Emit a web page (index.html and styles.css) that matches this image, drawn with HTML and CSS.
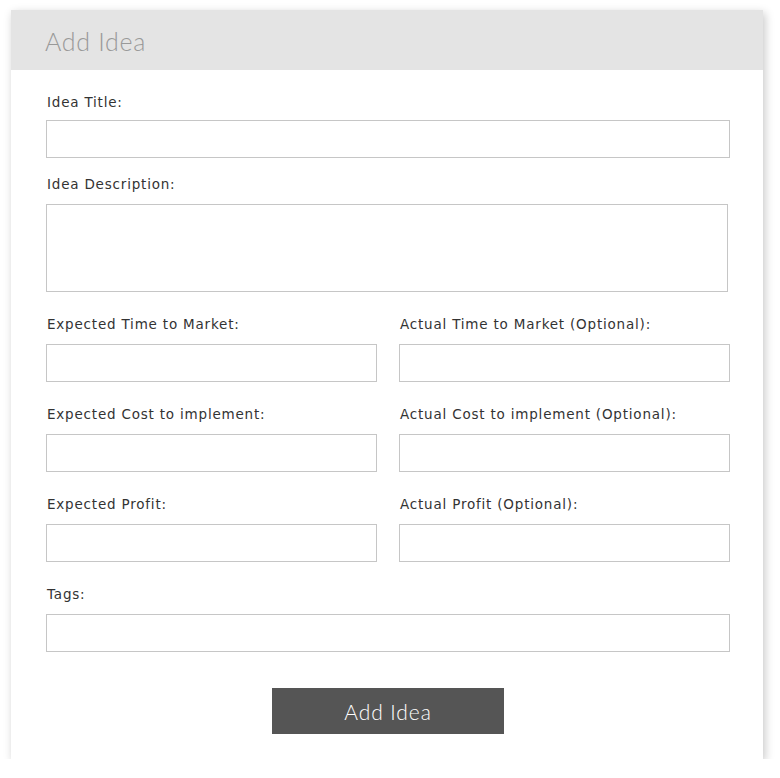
FILE: index.html
```html
<!DOCTYPE html>
<html lang="en">
<head>
    <meta charset="UTF-8">
    <meta name="viewport" content="width=device-width, initial-scale=1.0">
    <title>Add Idea</title>
    <link rel="stylesheet" href="styles.css">
</head>
<body>
    <div class="card">
        <div class="card-header">Add Idea</div>
        <form class="idea-form">
            <div class="field first">
                <label for="title">Idea Title:</label>
                <input type="text" id="title">
            </div>
            <div class="field">
                <label for="description">Idea Description:</label>
                <textarea id="description"></textarea>
            </div>
            <div class="row">
                <div class="field">
                    <label for="exp-time">Expected Time to Market:</label>
                    <input type="text" id="exp-time">
                </div>
                <div class="field">
                    <label for="act-time">Actual Time to Market (Optional):</label>
                    <input type="text" id="act-time">
                </div>
            </div>
            <div class="row">
                <div class="field">
                    <label for="exp-cost">Expected Cost to implement:</label>
                    <input type="text" id="exp-cost">
                </div>
                <div class="field">
                    <label for="act-cost">Actual Cost to implement (Optional):</label>
                    <input type="text" id="act-cost">
                </div>
            </div>
            <div class="row">
                <div class="field">
                    <label for="exp-profit">Expected Profit:</label>
                    <input type="text" id="exp-profit">
                </div>
                <div class="field">
                    <label for="act-profit">Actual Profit (Optional):</label>
                    <input type="text" id="act-profit">
                </div>
            </div>
            <div class="field">
                <label for="tags">Tags:</label>
                <input type="text" id="tags">
            </div>
            <div class="actions">
                <button type="button" class="submit">Add Idea</button>
            </div>
        </form>
    </div>
</body>
</html>
```

FILE: styles.css
```css
body {
    margin: 0;
    background-color: #fff;
    font-family: "DejaVu Sans", "Open Sans", sans-serif;
    color: #333;
}
.card {
    width: 752px;
    margin: 10px 0 0 11px;
    background-color: #fff;
    box-shadow: 2px 3px 9px rgba(0, 0, 0, 0.22);
}
.card-header {
    height: 60px;
    padding-left: 34px;
    background-color: #e4e4e4;
    color: #999;
    font-family: Lato, sans-serif;
    font-weight: 300;
    font-size: 25px;
    letter-spacing: 0.7px;
    line-height: 62px;
}
.idea-form {
    padding: 23px 33px 25px 35px;
}
.row {
    display: grid;
    grid-template-columns: 1fr 1fr;
    column-gap: 22px;
}
.field {
    display: flex;
    flex-direction: column;
    margin-bottom: 23px;
}
.field.first {
    margin-bottom: 17px;
}
.field label {
    font-size: 13.5px;
    line-height: 18px;
    letter-spacing: 0.8px;
    margin-bottom: 11px;
    padding-left: 1px;
}
.field.first label {
    margin-bottom: 9px;
}
.field input,
.field textarea {
    box-sizing: border-box;
    height: 38px;
    margin: 0;
    border: 1px solid #c6c6c6;
    border-radius: 0;
    font: inherit;
}
.field textarea {
    height: 88px;
    width: 682px;
    resize: none;
}
.actions {
    display: flex;
    justify-content: center;
    padding-top: 13px;
}
.submit {
    width: 232px;
    height: 46px;
    border: none;
    background-color: #555;
    color: #fff;
    font-family: Lato, sans-serif;
    font-weight: 300;
    font-size: 21px;
    letter-spacing: 0.9px;
    cursor: pointer;
}
```
